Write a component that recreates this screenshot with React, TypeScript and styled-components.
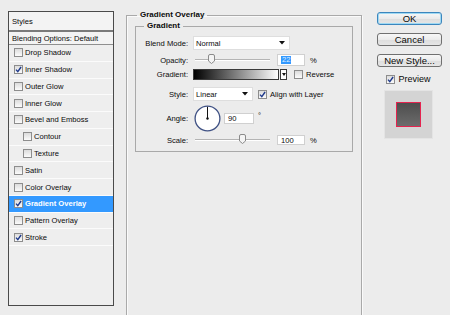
import React from 'react';
import styled, { createGlobalStyle, css } from 'styled-components';

const Global = createGlobalStyle`
  html, body { margin: 0; padding: 0; background: #ececec; }
  body { font-family: "Liberation Sans", Arial, sans-serif; }
  * { box-sizing: border-box; }
`;

const Dialog = styled.div`
  width: 450px;
  height: 315px;
  overflow: hidden;
  background: #ececec;
  display: flex;
  align-items: flex-start;
  font-family: "Liberation Sans", Arial, sans-serif;
  font-size: 7.6px;
  color: #0a0a0a;
`;

/* ---------- left styles list ---------- */
const StylesPanel = styled.div`
  margin: 11px 0 0 8px;
  width: 106px;
  height: 295px;
  border: 1px solid #4a4a4a;
  background: #eeeeee;
  display: flex;
  flex-direction: column;
  flex-shrink: 0;
`;

const PanelHeader = styled.div`
  height: 20px;
  padding-left: 3px;
  display: flex;
  align-items: center;
  background: #f3f3f3;
  border-bottom: 2px solid #7a7a7a;
`;

const BlendingRow = styled.div`
  height: 13px;
  padding-left: 3px;
  display: flex;
  align-items: center;
  background: #f3f3f3;
  border-bottom: 1px solid #8f8f8f;
`;

const StyleItem = styled.div<{ $indent?: boolean; $active?: boolean }>`
  height: 16.77px;
  padding-left: ${(p) => (p.$indent ? 14 : 5)}px;
  display: flex;
  align-items: center;
  gap: 2px;
  border-bottom: 1px solid #fbfbfb;
  ${(p) =>
    p.$active &&
    css`
      background: #3399ff;
      color: #ffffff;
      font-weight: bold;
    `}
`;

const CheckBox = styled.span<{ $size?: number }>`
  width: ${(p) => p.$size ?? 9}px;
  height: ${(p) => p.$size ?? 9}px;
  border: 1px solid #8d8d8d;
  background: linear-gradient(#dcdcdc, #fbfbfb);
  display: inline-flex;
  align-items: center;
  justify-content: center;
  flex-shrink: 0;
`;

const Check = ({ checked, size }: { checked?: boolean; size?: number }) => (
  <CheckBox $size={size}>
    {checked && (
      <svg width="7" height="7" viewBox="0 0 7 7">
        <path d="M1 3.6 L2.8 5.7 L6.1 1" fill="none" stroke="#1f3a8c" strokeWidth="1.4" />
      </svg>
    )}
  </CheckBox>
);

/* ---------- center fieldsets ---------- */
const OuterGroup = styled.fieldset`
  margin: 10px 0 0 12px;
  padding: 1px 8px 0 8px;
  width: 236px;
  height: 330px;
  border: 1px solid #a9a9a9;
  box-shadow: 1px 1px 0 #fafafa, inset 1px 1px 0 #fafafa;
  min-inline-size: 0;
  flex-shrink: 0;
`;

const GroupTitle = styled.legend<{ $offset: number }>`
  font-weight: bold;
  font-size: 8px;
  line-height: 10px;
  padding: 0 3px;
  margin-left: ${(p) => p.$offset}px;
  color: #0a0a0a;
`;

const InnerGroup = styled.fieldset`
  margin: 0;
  padding: 5px 0 6px 0;
  border: 1px solid #a9a9a9;
  min-inline-size: 0;
`;

const Row = styled.div<{ $h: number; $mt: number }>`
  height: ${(p) => p.$h}px;
  margin-top: ${(p) => p.$mt}px;
  display: flex;
  align-items: center;
`;

const Label = styled.span`
  width: 52px;
  margin-right: 5px;
  text-align: right;
  flex-shrink: 0;
`;

const Select = styled.div<{ $w: number }>`
  width: ${(p) => p.$w}px;
  height: 14px;
  background: #ffffff;
  border: 1px solid #dedede;
  display: flex;
  align-items: center;
  padding-left: 2px;
  justify-content: space-between;
  padding-right: 4px;
`;

const Arrow = () => (
  <svg width="6" height="4" viewBox="0 0 6 4">
    <path d="M0 0 H6 L3 3.5 Z" fill="#111" />
  </svg>
);

const SliderTrack = styled.div`
  position: relative;
  width: 75px;
  height: 2px;
  margin-left: 2px;
  border-top: 1px solid #b4b4b4;
  border-bottom: 1px solid #ffffff;
`;

const ThumbWrap = styled.span`
  position: absolute;
  top: -6px;
  margin-left: -3.5px;
  display: block;
  line-height: 0;
`;

const Slider = ({ value }: { value: number }) => (
  <SliderTrack>
    <ThumbWrap style={{ left: `${value * 100}%` }}>
      <svg width="7" height="10" viewBox="0 0 7 10">
        <path
          d="M0.5 2 Q0.5 0.5 2 0.5 H5 Q6.5 0.5 6.5 2 V7 L3.5 9.5 L0.5 7 Z"
          fill="#f4f4f4"
          stroke="#8a8a8a"
          strokeWidth="1"
        />
      </svg>
    </ThumbWrap>
  </SliderTrack>
);

const NumField = styled.div<{ $w: number; $h: number; $ml: number }>`
  width: ${(p) => p.$w}px;
  height: ${(p) => p.$h}px;
  margin-left: ${(p) => p.$ml}px;
  background: #ffffff;
  border: 1px solid #d0d0d0;
  display: flex;
  align-items: center;
  padding-left: 3px;
  flex-shrink: 0;
`;

const Selected = styled.span`
  background: #3399ff;
  color: #dfeeff;
  padding: 0 1px;
  line-height: 8px;
`;

const Unit = styled.span<{ $ml: number; $raise?: boolean }>`
  margin-left: ${(p) => p.$ml}px;
  ${(p) => p.$raise && css`align-self: flex-start; margin-top: 6px;`}
`;

const GradientBar = styled.div`
  width: 86px;
  height: 11px;
  border: 1px solid #3a3a3a;
  background: linear-gradient(to right, #000000, #ffffff);
`;

const GradientArrow = styled.div`
  width: 7px;
  height: 11px;
  margin-left: 1px;
  border: 1px solid #3a3a3a;
  background: #ffffff;
  display: flex;
  align-items: center;
  justify-content: center;
`;

const InlineCheck = styled.label<{ $ml: number }>`
  margin-left: ${(p) => p.$ml}px;
  display: flex;
  align-items: center;
  gap: 3px;
`;

const Dial = styled.svg`
  margin-left: 1px;
  flex-shrink: 0;
`;

/* ---------- right column ---------- */
const ButtonColumn = styled.div`
  margin: 12px 0 0 15px;
  width: 65px;
  display: flex;
  flex-direction: column;
  align-items: center;
  gap: 8px;
  flex-shrink: 0;
`;

const Button = styled.button<{ $primary?: boolean }>`
  width: 65px;
  height: 13px;
  padding: 0;
  font-family: "Liberation Sans", Arial, sans-serif;
  font-size: 9.5px;
  line-height: 11px;
  color: #0a0a0a;
  border-radius: 3px;
  border: 1px solid #707070;
  background: linear-gradient(#f7f7f7, #ebebeb 50%, #dddddd 51%, #e6e6e6);
  ${(p) =>
    p.$primary &&
    css`
      border-color: #3c86bd;
      box-shadow: inset 0 0 0 1px #9fd9f3;
    `}
`;

const PreviewToggle = styled.label`
  display: flex;
  align-items: center;
  gap: 3px;
  font-size: 9px;
  margin-top: -1px;
  margin-left: -2px;
`;

const PreviewBox = styled.div`
  width: 49px;
  height: 49px;
  margin-left: -2px;
  margin-top: -2px;
  background: #d4d4d4;
  border: 1px solid #e4e4e4;
  display: flex;
  align-items: center;
  justify-content: center;
`;

const PreviewSwatch = styled.div`
  width: 25px;
  height: 25px;
  border: 1.5px solid #e5234f;
  background: linear-gradient(#4d4d4d, #6c6c6c);
`;

const styleItems: { name: string; checked?: boolean; indent?: boolean; active?: boolean }[] = [
  { name: 'Drop Shadow' },
  { name: 'Inner Shadow', checked: true },
  { name: 'Outer Glow' },
  { name: 'Inner Glow' },
  { name: 'Bevel and Emboss' },
  { name: 'Contour', indent: true },
  { name: 'Texture', indent: true },
  { name: 'Satin' },
  { name: 'Color Overlay' },
  { name: 'Gradient Overlay', checked: true, active: true },
  { name: 'Pattern Overlay' },
  { name: 'Stroke', checked: true },
];

export default function App() {
  return (
    <>
      <Global />
      <Dialog>
        <StylesPanel>
          <PanelHeader>Styles</PanelHeader>
          <BlendingRow>Blending Options: Default</BlendingRow>
          {styleItems.map((s) => (
            <StyleItem key={s.name} $indent={s.indent} $active={s.active}>
              <Check checked={s.checked} />
              <span>{s.name}</span>
            </StyleItem>
          ))}
        </StylesPanel>

        <OuterGroup>
          <GroupTitle $offset={2}>Gradient Overlay</GroupTitle>
          <InnerGroup>
            <GroupTitle $offset={8}>Gradient</GroupTitle>
            <Row $h={14} $mt={0}>
              <Label>Blend Mode:</Label>
              <Select $w={97}>
                <span>Normal</span>
                <Arrow />
              </Select>
            </Row>
            <Row $h={12} $mt={4}>
              <Label>Opacity:</Label>
              <Slider value={0.22} />
              <NumField $w={28} $h={12} $ml={7}>
                <Selected>22</Selected>
              </NumField>
              <Unit $ml={5}>%</Unit>
            </Row>
            <Row $h={11} $mt={3}>
              <Label>Gradient:</Label>
              <GradientBar />
              <GradientArrow>
                <svg width="4" height="3" viewBox="0 0 4 3">
                  <path d="M0 0 H4 L2 3 Z" fill="#111" />
                </svg>
              </GradientArrow>
              <InlineCheck $ml={7}>
                <Check />
                <span>Reverse</span>
              </InlineCheck>
            </Row>
            <Row $h={14} $mt={7}>
              <Label>Style:</Label>
              <Select $w={60}>
                <span>Linear</span>
                <Arrow />
              </Select>
              <InlineCheck $ml={5}>
                <Check checked />
                <span>Align with Layer</span>
              </InlineCheck>
            </Row>
            <Row $h={26} $mt={4}>
              <Label>Angle:</Label>
              <Dial width="27" height="27" viewBox="0 0 27 27">
                <circle cx="13.5" cy="13.5" r="12.4" fill="#ffffff" stroke="#3f5184" strokeWidth="1.3" />
                <line x1="13.5" y1="13.5" x2="13.5" y2="1.8" stroke="#111" strokeWidth="1" />
                <circle cx="13.5" cy="13.5" r="1.2" fill="#111" />
              </Dial>
              <NumField $w={30} $h={11} $ml={3}>90</NumField>
              <Unit $ml={4} $raise>°</Unit>
            </Row>
            <Row $h={10} $mt={4}>
              <Label>Scale:</Label>
              <Slider value={0.63} />
              <NumField $w={28} $h={10} $ml={7}>100</NumField>
              <Unit $ml={5}>%</Unit>
            </Row>
          </InnerGroup>
        </OuterGroup>

        <ButtonColumn>
          <Button $primary>OK</Button>
          <Button>Cancel</Button>
          <Button>New Style...</Button>
          <PreviewToggle>
            <Check checked />
            <span>Preview</span>
          </PreviewToggle>
          <PreviewBox>
            <PreviewSwatch />
          </PreviewBox>
        </ButtonColumn>
      </Dialog>
    </>
  );
}
